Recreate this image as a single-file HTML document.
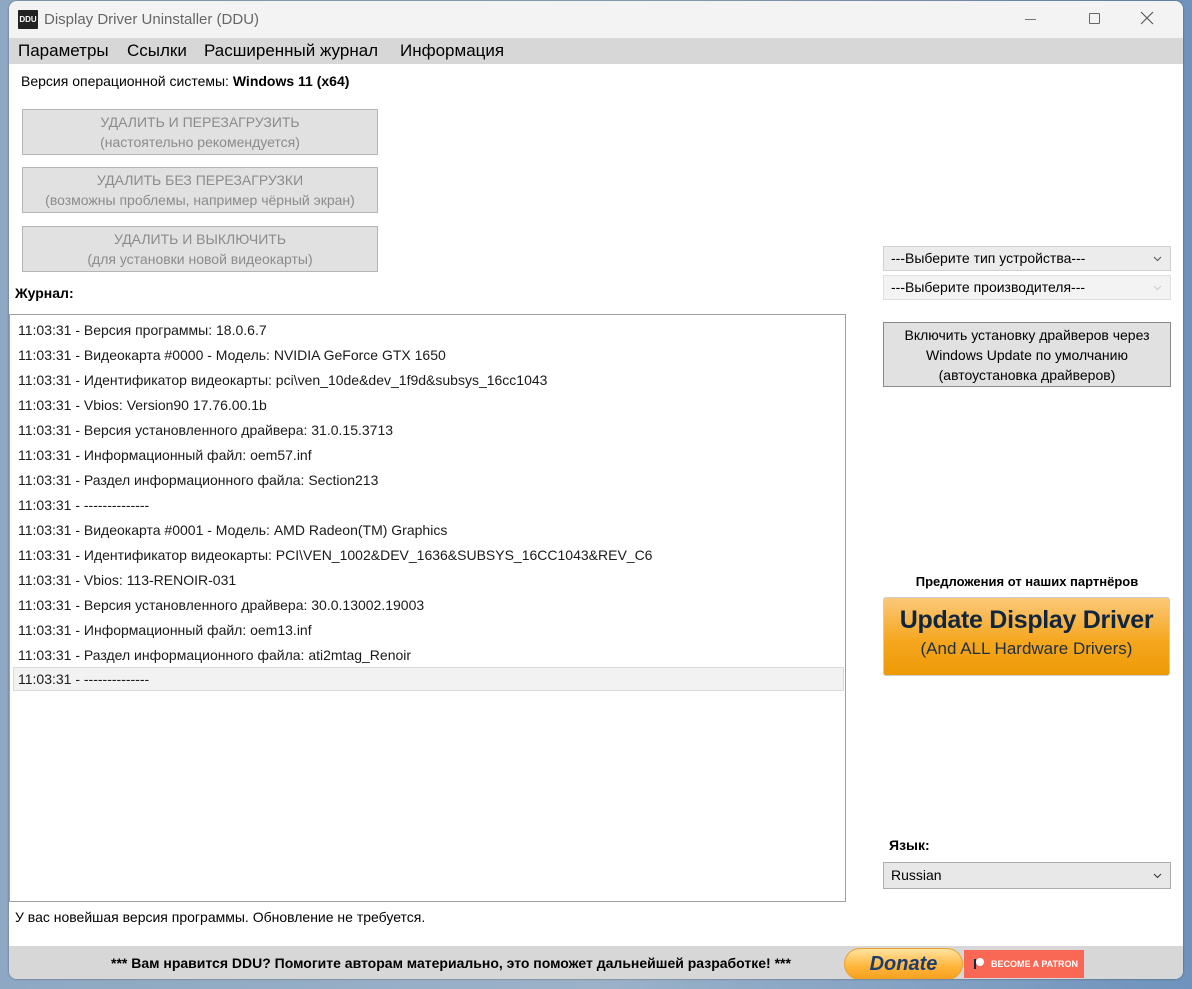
<!DOCTYPE html>
<html><head><meta charset="utf-8"><style>
*{margin:0;padding:0;box-sizing:border-box}
body{width:1192px;height:989px;overflow:hidden;position:relative;font-family:"Liberation Sans",sans-serif;font-size:14px;color:#000;
background:linear-gradient(90deg,#8ea8c3 0,#9bb2c9 50%,#6f93bd 100%)}
.a{position:absolute}
#win{left:9px;top:1px;width:1174px;height:978px;background:#fff;border-radius:8px 8px 8px 8px;overflow:hidden;box-shadow:0 0 2px rgba(0,0,0,.4)}
#title{left:0;top:0;width:1174px;height:37px;background:#f3f3f3}
#menu{left:0;top:37px;width:1174px;height:26px;background:#d7d7d7;font-size:17px}
#menu span{position:absolute;top:3px}
.btn{position:absolute;left:13px;width:356px;height:46px;background:#e1e1e1;border:1px solid #b5b5b5;color:#8b8b8b;text-align:center;font-size:14px;line-height:20px;padding-top:2px}
#log{left:0;top:313px;width:837px;height:588px;border:1px solid #a0a0a0;background:#fff}
.r{position:absolute;left:8px;font-size:14px;height:25px;line-height:25px;color:#1a1a1a}
.sel{position:absolute;left:874px;width:288px;height:25px;border:1px solid #d0d0d0;background:#ececec;font-size:14px;line-height:23px;padding-left:7px}
.sel svg{position:absolute;right:8px;top:9px}
</style></head><body>
<div id="win" class="a">
<div id="title" class="a">
 <div class="a" style="left:9px;top:9px;width:20px;height:19px;background:#222;border-radius:1px"><div style="color:#fff;font-size:8px;font-weight:bold;text-align:center;line-height:19px">DDU</div></div>
 <div class="a" style="left:35px;top:10px;font-size:15px;color:#666">Display Driver Uninstaller (DDU)</div>
 <div class="a" style="left:1016px;top:18px;width:11px;height:1px;background:#777"></div>
 <div class="a" style="left:1080px;top:12px;width:11px;height:11px;border:1px solid #666;border-radius:1px"></div>
 <svg class="a" style="left:1131px;top:10px" width="14" height="14"><path d="M1 1L13 13M13 1L1 13" stroke="#555" stroke-width="1.1"/></svg>
</div>
<div id="menu" class="a"><span style="left:9px">Параметры</span><span style="left:118px">Ссылки</span><span style="left:195px">Расширенный журнал</span><span style="left:391px">Информация</span></div>
<div class="a" style="left:12px;top:72px;font-size:14px">Версия операционной системы: <b>Windows 11 (x64)</b></div>
<div class="btn" style="top:108px">УДАЛИТЬ И ПЕРЕЗАГРУЗИТЬ<br>(настоятельно рекомендуется)</div>
<div class="btn" style="top:166px">УДАЛИТЬ БЕЗ ПЕРЕЗАГРУЗКИ<br>(возможны проблемы, например чёрный экран)</div>
<div class="btn" style="top:225px">УДАЛИТЬ И ВЫКЛЮЧИТЬ<br>(для установки новой видеокарты)</div>
<div class="a" style="left:6px;top:284px;font-weight:bold">Журнал:</div>
<div id="log" class="a">
<div class="r" style="top:3px">11:03:31 - Версия программы: 18.0.6.7</div>
<div class="r" style="top:28px">11:03:31 - Видеокарта #0000 - Модель: NVIDIA GeForce GTX 1650</div>
<div class="r" style="top:53px">11:03:31 - Идентификатор видеокарты: pci\ven_10de&amp;dev_1f9d&amp;subsys_16cc1043</div>
<div class="r" style="top:78px">11:03:31 - Vbios: Version90 17.76.00.1b</div>
<div class="r" style="top:103px">11:03:31 - Версия установленного драйвера: 31.0.15.3713</div>
<div class="r" style="top:128px">11:03:31 - Информационный файл: oem57.inf</div>
<div class="r" style="top:153px">11:03:31 - Раздел информационного файла: Section213</div>
<div class="r" style="top:178px">11:03:31 - --------------</div>
<div class="r" style="top:203px">11:03:31 - Видеокарта #0001 - Модель: AMD Radeon(TM) Graphics</div>
<div class="r" style="top:228px">11:03:31 - Идентификатор видеокарты: PCI\VEN_1002&amp;DEV_1636&amp;SUBSYS_16CC1043&amp;REV_C6</div>
<div class="r" style="top:253px">11:03:31 - Vbios: 113-RENOIR-031</div>
<div class="r" style="top:278px">11:03:31 - Версия установленного драйвера: 30.0.13002.19003</div>
<div class="r" style="top:303px">11:03:31 - Информационный файл: oem13.inf</div>
<div class="r" style="top:328px">11:03:31 - Раздел информационного файла: ati2mtag_Renoir</div>
<div class="a" style="left:3px;top:352px;width:831px;height:24px;background:#f2f2f2;border:1px solid #dadada"></div>
<div class="r" style="top:352px">11:03:31 - --------------</div>
</div>
<div class="a" style="left:6px;top:908px;font-size:14px">У вас новейшая версия программы. Обновление не требуется.</div>
<div class="sel" style="top:245px">---Выберите тип устройства---<svg width="9" height="6"><path d="M1 1L4.5 4.5L8 1" stroke="#555" fill="none"/></svg></div>
<div class="sel" style="top:274px;background:#f3f3f3;border-color:#e0e0e0">---Выберите производителя---<svg width="9" height="6"><path d="M1 1L4.5 4.5L8 1" stroke="#ccc" fill="none"/></svg></div>
<div class="a" style="left:874px;top:321px;width:288px;height:65px;background:#e1e1e1;border:1px solid #8a8a8a;text-align:center;font-size:14px;line-height:20px;padding-top:2px">Включить установку драйверов через<br>Windows Update по умолчанию<br>(автоустановка драйверов)</div>
<div class="a" style="left:874px;top:573px;width:288px;text-align:center;font-weight:bold;font-size:13px">Предложения от наших партнёров</div>
<div class="a" style="left:874px;top:596px;width:287px;height:79px;border:1px solid #ccc;border-radius:3px;background:linear-gradient(#fcc87a,#f5a71f 55%,#ee9a05);text-align:center">
 <div style="font-size:25px;font-weight:bold;color:#10253e;margin-top:8px;letter-spacing:-0.3px">Update Display Driver</div>
 <div style="font-size:17px;color:#1d2e44;margin-top:4px">(And ALL Hardware Drivers)</div>
</div>
<div class="a" style="left:880px;top:836px;font-weight:bold">Язык:</div>
<div class="sel" style="top:861px;height:27px;line-height:25px;border-color:#adadad;background:#e8e8e8">Russian<svg width="9" height="6" style="top:10px"><path d="M1 1L4.5 4.5L8 1" stroke="#333" fill="none"/></svg></div>
<div class="a" style="left:0;top:945px;width:1174px;height:33px;background:#d7d7d7"></div>
<div class="a" style="left:102px;top:954px;font-weight:bold;font-size:14px">*** Вам нравится DDU? Помогите авторам материально, это поможет дальнейшей разработке! ***</div>
<div class="a" style="left:835px;top:947px;width:119px;height:32px;border-radius:16px;border:1px solid #f0a030;background:linear-gradient(#ffe3a0,#ffb43a 60%,#f6a01e);text-align:center;font-style:italic;font-weight:bold;font-size:20px;color:#1d3d6e;line-height:30px">Donate</div>
<div class="a" style="left:955px;top:949px;width:120px;height:28px;background:#f96854;color:#fff;font-size:9px;font-weight:bold;line-height:28px;padding-left:27px">BECOME A PATRON
 <div class="a" style="left:10px;top:9px;width:2px;height:10px;background:#052d49"></div>
 <div class="a" style="left:12px;top:8px;width:8px;height:8px;border-radius:50%;background:#fff"></div>
</div>
</div>
</body></html>
